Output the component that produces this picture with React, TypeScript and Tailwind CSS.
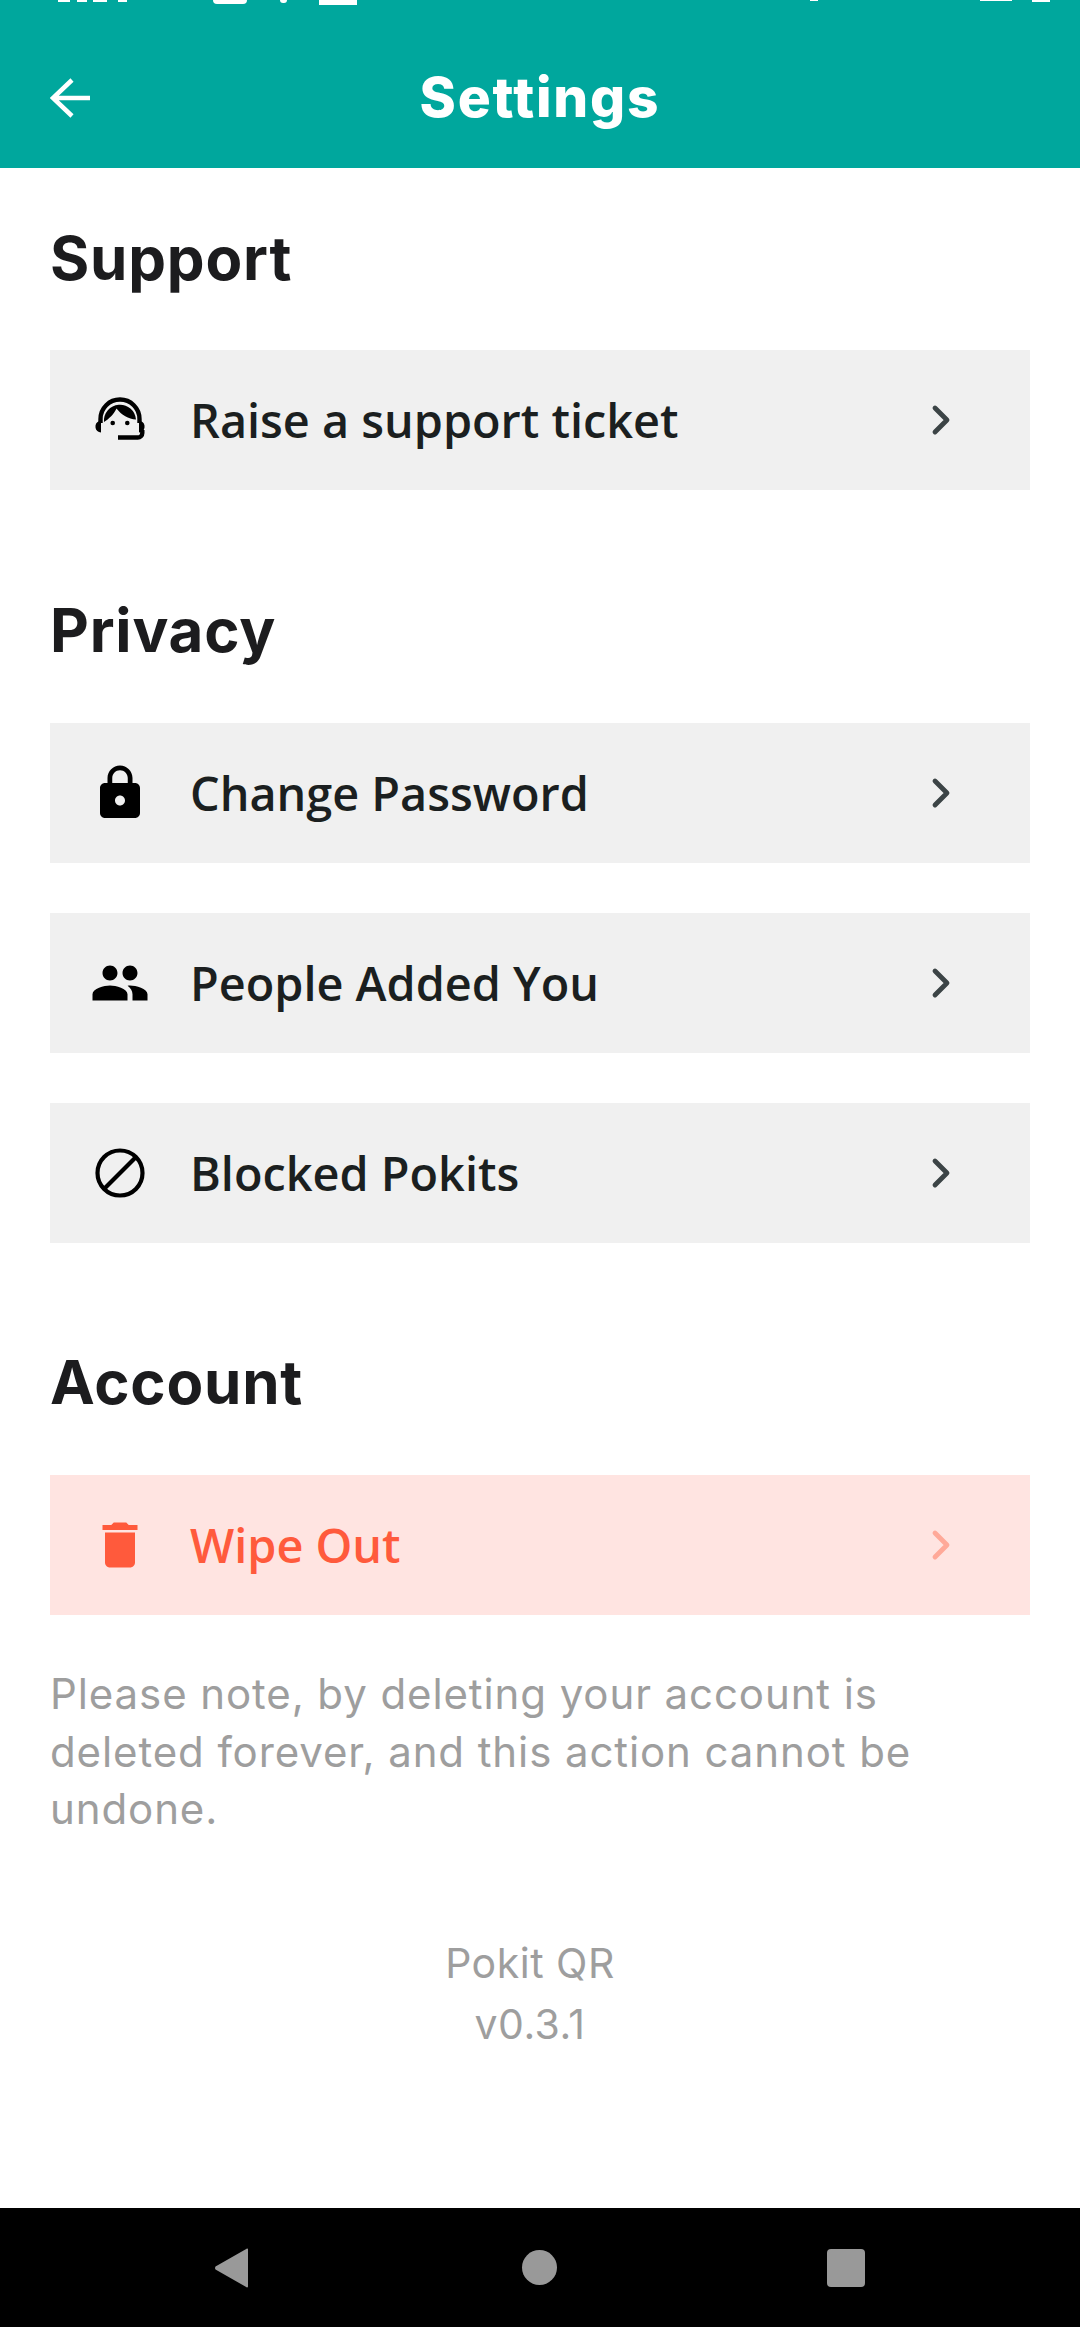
import { ChevronRight } from "lucide-react";
import type { ReactNode } from "react";

function HeadsetIcon() {
  return (
    <svg viewBox="0 0 60 56" className="h-[56px] w-[60px]" fill="none">
      <path d="M10.500 31v-4a19.500 19.500 0 0 1 39 0v4" stroke="currentColor" strokeWidth="4.400" />
      <path d="M14 30A16 16 0 0 1 46 27.500C38.500 27 31.500 23 26.500 16.500 24 22 19 27 14 30z" fill="currentColor" />
      <circle cx="22.700" cy="31" r="2.300" fill="currentColor" />
      <circle cx="37.300" cy="31" r="2.300" fill="currentColor" />
      <path d="M11 29v11.500A5.500 5.500 0 0 1 5.500 35.500v-2A5.500 5.500 0 0 1 11 29zM49 29a5.500 5.500 0 0 1 5.500 4.500v2a5.500 5.500 0 0 1-5.500 5z" fill="currentColor" />
      <path d="M52.300 38v3a4.500 4.500 0 0 1-4.500 4.500H28" stroke="currentColor" strokeWidth="4.400" />
    </svg>
  );
}

function LockIcon() {
  return (
    <svg viewBox="0 0 24 24" className="h-[60px] w-[60px]" fill="currentColor">
      <path d="M18 8h-1V6c0-2.760-2.240-5-5-5S7 3.240 7 6v2H6c-1.100 0-2 .9-2 2v10c0 1.100.9 2 2 2h12c1.100 0 2-.9 2-2V10c0-1.100-.9-2-2-2zm-6 9c-1.100 0-2-.9-2-2s.9-2 2-2 2 .9 2 2-.9 2-2 2zm3.100-9H8.900V6c0-1.710 1.390-3.100 3.100-3.100 1.710 0 3.100 1.390 3.100 3.100v2z" />
    </svg>
  );
}

function PeopleIcon() {
  return (
    <svg viewBox="0 0 24 24" className="h-[60px] w-[60px]" fill="currentColor">
      <path d="M16 11c1.660 0 2.990-1.340 2.990-3S17.660 5 16 5c-1.660 0-3 1.340-3 3s1.340 3 3 3zm-8 0c1.660 0 2.990-1.340 2.990-3S9.660 5 8 5C6.340 5 5 6.340 5 8s1.340 3 3 3zm0 2c-2.330 0-7 1.170-7 3.500V19h14v-2.500c0-2.330-4.670-3.500-7-3.500zm8 0c-.29 0-.62.020-.97.050 1.160.84 1.970 1.970 1.970 3.450V19h6v-2.500c0-2.330-4.670-3.500-7-3.500z" />
    </svg>
  );
}

function BlockIcon() {
  return (
    <svg viewBox="0 0 50 50" className="h-[50px] w-[50px]" fill="none" stroke="currentColor" strokeWidth="4.200">
      <circle cx="25" cy="25" r="22.500" />
      <path d="M9 41 41 9" />
    </svg>
  );
}

function TrashIcon() {
  return (
    <svg viewBox="0 0 24 24" className="h-[60px] w-[60px]" fill="currentColor">
      <path d="M6 19c0 1.100.9 2 2 2h8c1.100 0 2-.9 2-2V7H6v12zM19 4h-3.500l-1-1h-5l-1 1H5v2h14V4z" />
    </svg>
  );
}

type RowProps = {
  icon: ReactNode;
  label: string;
  danger?: boolean;
};

function Row({ icon, label, danger }: RowProps) {
  return (
    <div
      className={
        danger
          ? "flex h-[140px] items-center bg-[#ffe4e1] text-[#ff5a3c]"
          : "flex h-[140px] items-center bg-[#f0f0f0] text-[#1b1f20]"
      }
    >
      <div className={danger ? "flex w-[140px] justify-center" : "flex w-[140px] justify-center text-black"}>{icon}</div>
      <span className="flex-1 font-['Open_Sans',sans-serif] text-[46.800px] font-[550] leading-none">{label}</span>
      <ChevronRight
        strokeWidth={2.4}
        className={danger ? "mr-[65px] h-[48px] w-[48px] text-[#ffa999]" : "mr-[65px] h-[48px] w-[48px] text-[#3c4446]"}
      />
    </div>
  );
}

function Heading({ children }: { children: ReactNode }) {
  return (
    <h2 className="flex h-[93px] items-center font-['Inter',sans-serif] text-[60px] font-bold leading-none tracking-[0.800px] text-[#1c1c1e]">
      {children}
    </h2>
  );
}

export default function App() {
  return (
    <div className="flex h-[2327px] w-[1080px] flex-col overflow-hidden bg-white">
      <header className="relative flex h-[168px] shrink-0 items-center justify-center bg-[#00a79d] pt-[26px] text-white">
        {/* status bar, nearly all scrolled off the top */}
        <div className="absolute left-[58px] top-0 flex items-start">
          <div className="h-[2px] w-[12px] bg-white" />
          <div className="ml-[7px] h-[2px] w-[10px] bg-white" />
          <div className="ml-[6px] h-[2px] w-[14px] bg-white" />
          <div className="ml-[11px] h-[2px] w-[9px] bg-white" />
          <div className="ml-[86px] h-[4px] w-[34px] rounded-b-[12px] bg-white" />
          <div className="ml-[33px] h-[3px] w-[7px] rounded-b-full bg-white" />
          <div className="ml-[32px] h-[5px] w-[38px] bg-white" />
        </div>
        <div className="absolute left-[810px] top-0 flex items-start">
          <div className="h-[1px] w-[8px] bg-white" />
          <div className="ml-[162px] h-[1px] w-[32px] bg-white" />
          <div className="ml-[20px] h-[2px] w-[18px] bg-white" />
        </div>
        <svg viewBox="0 0 40 40" className="absolute left-[50px] top-[78px] h-[40px] w-[40px]" fill="none" stroke="currentColor" strokeWidth="4.500">
          <path d="M40 20H3M22 2 3 20l19 18" />
        </svg>
        <h1 className="font-['Inter',sans-serif] text-[55px] font-extrabold leading-none tracking-[1.800px]">Settings</h1>
      </header>

      <main className="flex flex-1 flex-col px-[50px] pt-[43px]">
        <Heading>Support</Heading>
        <div className="mt-[46px]">
          <Row icon={<HeadsetIcon />} label="Raise a support ticket" />
        </div>

        <div className="mt-[93px]">
          <Heading>Privacy</Heading>
        </div>
        <div className="mt-[47px] flex flex-col gap-[50px]">
          <Row icon={<LockIcon />} label="Change Password" />
          <Row icon={<PeopleIcon />} label="People Added You" />
          <Row icon={<BlockIcon />} label="Blocked Pokits" />
        </div>

        <div className="mt-[92px]">
          <Heading>Account</Heading>
        </div>
        <div className="mt-[47px]">
          <Row danger icon={<TrashIcon />} label="Wipe Out" />
        </div>

        <p className="mt-[50px] max-w-[900px] font-['Inter',sans-serif] text-[42px] leading-[57.500px] tracking-[0.900px] text-[#9e9e9e]">
          Please note, by deleting your account is deleted forever, and this action cannot be undone.
        </p>

        <div className="mt-[95px] pr-[20px] text-center font-['Inter',sans-serif] text-[41px] leading-[61px] tracking-[0.500px] text-[#9e9e9e]">
          <div>Pokit QR</div>
          <div>v0.3.1</div>
        </div>
      </main>

      <nav className="flex h-[119px] shrink-0 items-center bg-black pl-[214px]">
        <svg viewBox="0 0 35 40" className="h-[40px] w-[35px]" fill="#999999">
          <path d="M34 1.500v37a1 1 0 0 1-1.800.6L1.500 21.500a2.500 2.500 0 0 1 0-3L32.200.9A1 1 0 0 1 34 1.500z" />
        </svg>
        <div className="ml-[273px] h-[35px] w-[35px] rounded-full bg-[#999999]" />
        <div className="ml-[270px] h-[38px] w-[38px] rounded-[4px] bg-[#999999]" />
      </nav>
    </div>
  );
}
